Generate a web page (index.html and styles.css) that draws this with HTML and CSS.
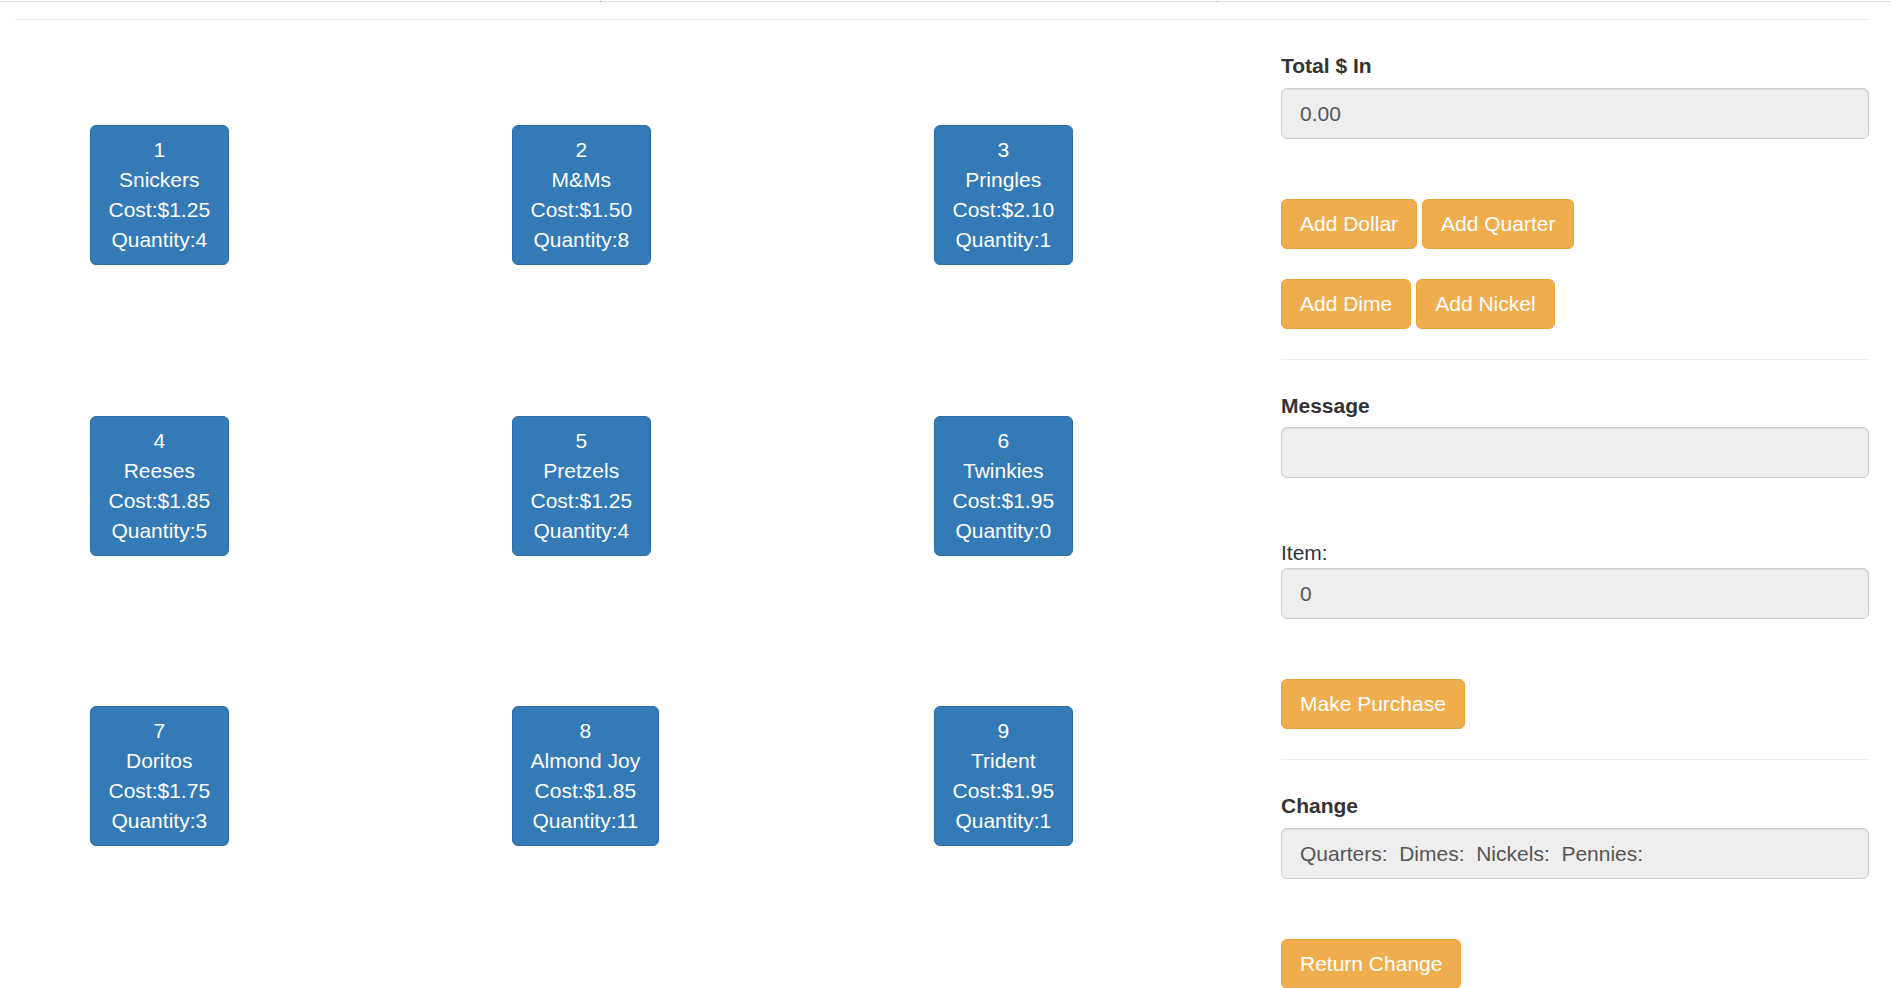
FILE: index.html
```html
<!DOCTYPE html>
<html lang="en">
<head>
<meta charset="utf-8">
<title>Vending Machine</title>
<link rel="stylesheet" href="styles.css">
</head>
<body>
<div class="topbar">
  <span class="topbar-cell cell-a"></span><span class="tick"></span>
  <span class="topbar-cell cell-b"></span><span class="tick"></span>
  <span class="topbar-cell cell-c"></span>
</div>
<hr class="rule-top">
<div class="layout">
  <div class="items">
    <div class="item-cell"><button class="item">1<br>Snickers<br>Cost:$1.25<br>Quantity:4</button></div>
    <div class="item-cell"><button class="item">2<br>M&amp;Ms<br>Cost:$1.50<br>Quantity:8</button></div>
    <div class="item-cell"><button class="item">3<br>Pringles<br>Cost:$2.10<br>Quantity:1</button></div>
    <div class="item-cell"><button class="item">4<br>Reeses<br>Cost:$1.85<br>Quantity:5</button></div>
    <div class="item-cell"><button class="item">5<br>Pretzels<br>Cost:$1.25<br>Quantity:4</button></div>
    <div class="item-cell"><button class="item">6<br>Twinkies<br>Cost:$1.95<br>Quantity:0</button></div>
    <div class="item-cell"><button class="item">7<br>Doritos<br>Cost:$1.75<br>Quantity:3</button></div>
    <div class="item-cell"><button class="item">8<br>Almond Joy<br>Cost:$1.85<br>Quantity:11</button></div>
    <div class="item-cell"><button class="item">9<br>Trident<br>Cost:$1.95<br>Quantity:1</button></div>
  </div>
  <div class="panel">
    <label class="label-bold">Total $ In</label>
    <div class="field">0.00</div>
    <div class="btn-row first-row">
      <button class="btn">Add Dollar</button>
      <button class="btn">Add Quarter</button>
    </div>
    <div class="btn-row">
      <button class="btn">Add Dime</button>
      <button class="btn">Add Nickel</button>
    </div>
    <hr class="rule">
    <label class="label-bold">Message</label>
    <div class="field"></div>
    <label class="label-plain">Item:</label>
    <div class="field field-item">0</div>
    <div class="btn-row group-gap">
      <button class="btn">Make Purchase</button>
    </div>
    <hr class="rule">
    <label class="label-bold">Change</label>
    <div class="field change-field">Quarters:&nbsp; Dimes:&nbsp; Nickels:&nbsp; Pennies:</div>
    <div class="btn-row group-gap">
      <button class="btn">Return Change</button>
    </div>
  </div>
</div>
</body>
</html>
```

FILE: styles.css
```css
html, body {
  overflow: hidden;
}

body {
  margin: 0;
  font-family: "Liberation Sans", Arial, Helvetica, sans-serif;
  font-size: 21px;
  line-height: 30px;
  color: #333;
  background: #fff;
  width: 1891px;
}

.topbar {
  display: flex;
  margin-top: 1px;
  height: 1px;
}

.topbar-cell {
  display: block;
  height: 1px;
  background: #dddddd;
}

.cell-a { width: 600px; }
.cell-b { width: 616px; }
.cell-c { flex: 1; }

.tick {
  display: block;
  width: 1px;
  height: 1px;
  background: #8a8a8a;
}

.rule-top {
  margin: 17px 22px 0 15px;
  border: 0;
  border-top: 1px solid #eee;
  height: 0;
}

.layout {
  display: grid;
  grid-template-columns: 1261px 1fr;
}

.items {
  display: grid;
  grid-template-columns: repeat(3, 422px);
  row-gap: 150.5px;
  padding: 105px 0 0 90px;
  align-content: start;
}

.item-cell {
  display: block;
}

.item {
  display: inline-block;
  font: inherit;
  line-height: 30px;
  color: #fff;
  background: #337ab7;
  border: 1px solid #2e6da4;
  border-radius: 6px;
  padding: 9px 17.5px;
  text-align: center;
  white-space: nowrap;
  cursor: pointer;
}

.panel {
  padding: 30px 22px 0 20px;
  display: flex;
  flex-direction: column;
  align-items: stretch;
}

.label-bold {
  display: block;
  font-weight: bold;
  padding-top: 1px;
  margin-bottom: 6.5px;
}

.label-plain {
  display: block;
  margin-top: 60px;
}

.field {
  box-sizing: border-box;
  height: 51px;
  padding: 10px 18px 8px;
  font-size: 21px;
  line-height: 30px;
  color: #555;
  background: #eee;
  border: 1px solid #ccc;
  border-radius: 6px;
  box-shadow: inset 0 1px 1px rgba(0, 0, 0, 0.075);
  white-space: pre;
}

.btn-row {
  display: flex;
  gap: 5px;
  margin-top: 30px;
}

.first-row {
  margin-top: 60px;
}

.group-gap {
  margin-top: 60px;
}

.btn {
  font: inherit;
  line-height: 30px;
  color: #fff;
  background: #f0ad4e;
  border: 1px solid #eea236;
  border-radius: 6px;
  padding: 9px 18px;
  white-space: nowrap;
  cursor: pointer;
}

.rule {
  width: 100%;
  margin: 30px 0;
  border: 0;
  border-top: 1px solid #eee;
  height: 0;
}
```
